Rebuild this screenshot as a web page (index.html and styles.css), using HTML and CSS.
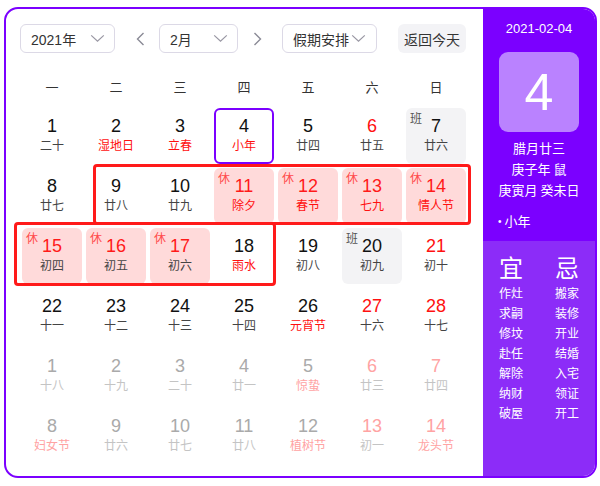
FILE: index.html
```html
<!DOCTYPE html>
<html lang="zh-CN">
<head>
<meta charset="utf-8">
<title>万年历</title>
<link rel="stylesheet" href="styles.css">
</head>
<body>
<div class="cal">
  <div class="main">
    <div class="toolbar">
      <div class="select sel-year"><span>2021年</span><svg class="chev" viewBox="0 0 16 10"><path d="M1 1.5 L8 8 L15 1.5"/></svg></div>
      <div class="arrow"><svg viewBox="0 0 9 14"><path d="M7.5 1 L1.5 7 L7.5 13"/></svg></div>
      <div class="select sel-month"><span>2月</span><svg class="chev" viewBox="0 0 16 10"><path d="M1 1.5 L8 8 L15 1.5"/></svg></div>
      <div class="arrow arrow-next"><svg viewBox="0 0 9 14"><path d="M1.5 1 L7.5 7 L1.5 13"/></svg></div>
      <div class="select sel-holiday"><span>假期安排</span><svg class="chev" viewBox="0 0 16 10"><path d="M1 1.5 L8 8 L15 1.5"/></svg></div>
      <div class="today-btn">返回今天</div>
    </div>
    <div class="weekdays">
      <span>一</span><span>二</span><span>三</span><span>四</span><span>五</span><span>六</span><span>日</span>
    </div>
    <div class="grid">
      <div class="cell"><b>1</b><i>二十</i></div>
      <div class="cell"><b>2</b><i class="fest">湿地日</i></div>
      <div class="cell"><b>3</b><i class="fest">立春</i></div>
      <div class="cell today"><b>4</b><i class="fest">小年</i></div>
      <div class="cell"><b>5</b><i>廿四</i></div>
      <div class="cell"><b class="wk">6</b><i>廿五</i></div>
      <div class="cell work"><em>班</em><b>7</b><i>廿六</i></div>

      <div class="cell"><b>8</b><i>廿七</i></div>
      <div class="cell"><b>9</b><i>廿八</i></div>
      <div class="cell"><b>10</b><i>廿九</i></div>
      <div class="cell rest"><em>休</em><b>11</b><i class="fest">除夕</i></div>
      <div class="cell rest"><em>休</em><b>12</b><i class="fest">春节</i></div>
      <div class="cell rest"><em>休</em><b>13</b><i class="fest">七九</i></div>
      <div class="cell rest"><em>休</em><b>14</b><i class="fest">情人节</i></div>

      <div class="cell rest"><em>休</em><b>15</b><i>初四</i></div>
      <div class="cell rest"><em>休</em><b>16</b><i>初五</i></div>
      <div class="cell rest"><em>休</em><b>17</b><i>初六</i></div>
      <div class="cell"><b>18</b><i class="fest">雨水</i></div>
      <div class="cell"><b>19</b><i>初八</i></div>
      <div class="cell work"><em>班</em><b>20</b><i>初九</i></div>
      <div class="cell"><b class="wk">21</b><i>初十</i></div>

      <div class="cell"><b>22</b><i>十一</i></div>
      <div class="cell"><b>23</b><i>十二</i></div>
      <div class="cell"><b>24</b><i>十三</i></div>
      <div class="cell"><b>25</b><i>十四</i></div>
      <div class="cell"><b>26</b><i class="fest">元宵节</i></div>
      <div class="cell"><b class="wk">27</b><i>十六</i></div>
      <div class="cell"><b class="wk">28</b><i>十七</i></div>

      <div class="cell other"><b>1</b><i>十八</i></div>
      <div class="cell other"><b>2</b><i>十九</i></div>
      <div class="cell other"><b>3</b><i>二十</i></div>
      <div class="cell other"><b>4</b><i>廿一</i></div>
      <div class="cell other"><b>5</b><i class="fest">惊蛰</i></div>
      <div class="cell other"><b class="wk">6</b><i>廿三</i></div>
      <div class="cell other"><b class="wk">7</b><i>廿四</i></div>

      <div class="cell other"><b>8</b><i class="fest">妇女节</i></div>
      <div class="cell other"><b>9</b><i>廿六</i></div>
      <div class="cell other"><b>10</b><i>廿七</i></div>
      <div class="cell other"><b>11</b><i>廿八</i></div>
      <div class="cell other"><b>12</b><i class="fest">植树节</i></div>
      <div class="cell other"><b class="wk">13</b><i>初一</i></div>
      <div class="cell other"><b class="wk">14</b><i class="fest">龙头节</i></div>

      <div class="mark mark-a"></div>
      <div class="mark mark-b"></div>
    </div>
  </div>
  <div class="side">
    <div class="side-top">
      <div class="side-date">2021-02-04</div>
      <div class="big-day">4</div>
      <div class="lunar-line">腊月廿三</div>
      <div class="lunar-line">庚子年 鼠</div>
      <div class="lunar-line">庚寅月 癸未日</div>
      <div class="side-fest"><span class="dot">•</span>小年</div>
    </div>
    <div class="side-bottom">
      <div class="yj">
        <div class="yj-col">
          <div class="yj-head">宜</div>
          <div>作灶</div><div>求嗣</div><div>修坟</div><div>赴任</div><div>解除</div><div>纳财</div><div>破屋</div>
        </div>
        <div class="yj-col">
          <div class="yj-head">忌</div>
          <div>搬家</div><div>装修</div><div>开业</div><div>结婚</div><div>入宅</div><div>领证</div><div>开工</div>
        </div>
      </div>
    </div>
  </div>
</div>
</body>
</html>
```
FILE: styles.css
```css
* { box-sizing: border-box; }
html, body { margin: 0; padding: 0; background: #fff; }
body {
  font-family: "Liberation Sans", "Noto Sans CJK SC", sans-serif;
  color: #333;
}
.cal {
  margin: 7px 0 0 4px;
  width: 593px;
  height: 471px;
  border: 2px solid #7b00ff;
  border-radius: 14px;
  display: flex;
  overflow: hidden;
  background: #fff;
}
.main {
  flex: 1;
  padding: 15px 0 0 14px;
}
.toolbar {
  display: flex;
  align-items: center;
  height: 29px;
}
.select {
  height: 29px;
  border: 1px solid #dcd9e6;
  border-radius: 6px;
  display: flex;
  align-items: center;
  justify-content: space-between;
  padding: 0 9px 0 10px;
  font-size: 14px;
  color: #333;
  font-family: "Noto Sans CJK SC", "Liberation Sans", sans-serif;
}
.select span { font-family: "Liberation Sans", "Noto Sans CJK SC", sans-serif; }
.sel-year { width: 95px; }
.sel-month { width: 79px; }
.sel-holiday { width: 95px; padding-left: 10px; padding-right: 10px; }
.chev { width: 15px; height: 9px; }
.chev path { fill: none; stroke: #9a98a4; stroke-width: 1.4; }
.arrow {
  width: 20px;
  height: 29px;
  margin: 0 9px 0 15px;
  display: flex;
  align-items: center;
  justify-content: center;
}
.arrow-next { margin: 0 15px 0 9px; }
.arrow svg { width: 9px; height: 14px; }
.arrow path { fill: none; stroke: #8a8a96; stroke-width: 1.4; }
.today-btn {
  margin-left: 21px;
  width: 68px;
  height: 29px;
  border-radius: 6px;
  background: #f3f3f6;
  display: flex;
  align-items: center;
  justify-content: center;
  font-size: 14px;
  color: #333;
  font-family: "Noto Sans CJK SC", sans-serif;
}
.weekdays {
  margin-top: 13px;
  height: 40px;
  display: grid;
  grid-template-columns: repeat(7, 64px);
  align-items: center;
  font-size: 13px;
  color: #333;
  font-family: "Noto Sans CJK SC", sans-serif;
}
.weekdays span { text-align: center; }
.grid {
  position: relative;
  display: grid;
  grid-template-columns: repeat(7, 64px);
  grid-auto-rows: 60px;
}
.cell {
  position: relative;
  margin: 2px;
  height: 56px;
  border-radius: 6px;
  text-align: center;
  padding-top: 8px;
}
.cell b {
  display: block;
  font-weight: normal;
  font-size: 18px;
  line-height: 20px;
  color: #111;
  font-family: "Liberation Sans", sans-serif;
}
.cell i {
  display: block;
  font-style: normal;
  font-size: 12px;
  line-height: 16px;
  margin-top: 1px;
  color: #444;
  font-family: "Noto Sans CJK SC", sans-serif;
}
.cell em {
  position: absolute;
  left: 4px;
  top: 3px;
  font-style: normal;
  font-size: 12px;
  line-height: 14px;
  font-family: "Noto Sans CJK SC", sans-serif;
}
.cell b.wk { color: #ff1010; }
.cell i.fest { color: #ff1010; }
.today { border: 2px solid #7b00ff; padding-top: 6px; }
.rest { background: #ffdada; }
.rest b { color: #ff1a1a; }
.rest em { color: #ff4a4a; }
.work { background: #f3f3f5; }
.work em { color: #555; }
.other b { color: #aaa; }
.other i { color: #c4c4c4; }
.other b.wk { color: #ffa3a3; }
.other i.fest { color: #ffa3a3; }
.mark {
  position: absolute;
  border: 3px solid #ff1a1a;
  border-radius: 4px;
  pointer-events: none;
}
.mark-a { left: 73px; top: 58px; width: 378px; height: 61px; }
.mark-b { left: -6px; top: 116px; width: 262px; height: 64px; }

.side {
  width: 112px;
  display: flex;
  flex-direction: column;
  color: #fff;
  font-family: "Noto Sans CJK SC", sans-serif;
}
.side-top {
  background: #7b00ff;
  height: 232px;
  padding-top: 11px;
  display: flex;
  flex-direction: column;
  align-items: center;
}
.side-date {
  font-family: "Liberation Sans", sans-serif;
  font-size: 13px;
  line-height: 18px;
}
.big-day {
  margin-top: 14px;
  width: 80px;
  height: 80px;
  border-radius: 9px;
  background: #ba82ff;
  display: flex;
  align-items: center;
  justify-content: center;
  font-family: "Liberation Sans", sans-serif;
  font-size: 52px;
  font-weight: normal;
}
.lunar-line {
  font-size: 13px;
  line-height: 21px;
}
.big-day + .lunar-line { margin-top: 5px; }
.side-fest {
  align-self: flex-start;
  margin-left: 15px;
  margin-top: 10px;
  font-size: 13px;
  line-height: 21px;
}
.dot {
  font-family: "Liberation Sans", sans-serif;
  font-size: 10px;
  margin-right: 3px;
  vertical-align: 1px;
}
.side-bottom {
  flex: 1;
  background: #8c2cf8;
  padding-top: 11px;
}
.yj { display: flex; }
.yj-col {
  width: 56px;
  text-align: center;
  font-size: 12px;
  line-height: 20px;
}
.yj-head {
  font-size: 24px;
  line-height: 30px;
  margin-bottom: 1px;
}
```
